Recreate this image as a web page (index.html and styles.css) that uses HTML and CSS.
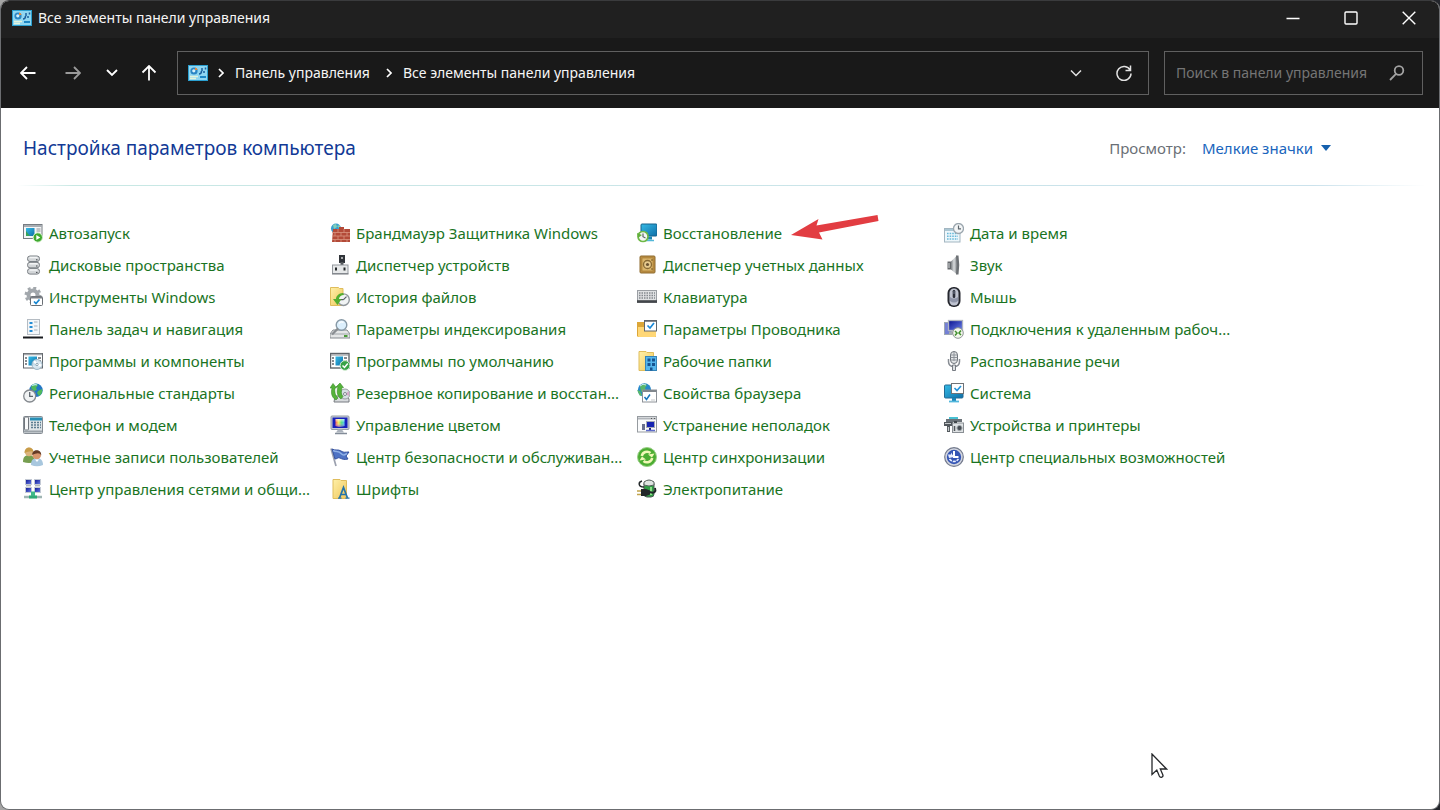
FILE: index.html
```html
<!DOCTYPE html>
<html lang="ru">
<head>
<meta charset="utf-8">
<title>Все элементы панели управления</title>
<link rel="stylesheet" href="styles.css">
</head>
<body>
<svg class="defs" aria-hidden="true">
  <defs>
    <linearGradient id="blue" x1="0" y1="0" x2="1" y2="1"><stop offset="0" stop-color="#35bbe6"/><stop offset="1" stop-color="#0f6fa8"/></linearGradient>
    <linearGradient id="navy" x1="0" y1="0" x2="1" y2="1"><stop offset="0" stop-color="#0a1290"/><stop offset="1" stop-color="#6d83e8"/></linearGradient>
    <linearGradient id="grey" x1="0" y1="0" x2="1" y2="0"><stop offset="0" stop-color="#7c8084"/><stop offset=".5" stop-color="#d9dcde"/><stop offset="1" stop-color="#85898d"/></linearGradient>
    <linearGradient id="folder" x1="0" y1="0" x2="1" y2="1"><stop offset="0" stop-color="#fff0a8"/><stop offset="1" stop-color="#efc75c"/></linearGradient>
    <linearGradient id="hue" x1="0" y1="0" x2="1" y2="0"><stop offset="0" stop-color="#f04a4a"/><stop offset=".35" stop-color="#f5ec4a"/><stop offset=".65" stop-color="#44dd72"/><stop offset="1" stop-color="#35bdf2"/></linearGradient>
    <linearGradient id="shade" x1="0" y1="0" x2="0" y2="1"><stop offset="0" stop-color="#fff" stop-opacity=".7"/><stop offset=".45" stop-color="#fff" stop-opacity=".1"/><stop offset="1" stop-color="#7a1fe0" stop-opacity=".7"/></linearGradient>
    <symbol id="cpl" viewBox="0 0 20 16">
      <rect width="20" height="16" fill="#2a9fd0"/><rect x="1" y="1" width="18" height="14" fill="#8fd6f1"/>
      <circle cx="6" cy="6" r="3.600" fill="#2c86c4"/><path d="M7 5V2.400A3 3 0 0 1 9.600 5z" fill="#e58a3f"/><circle cx="5.800" cy="5.800" r="1.600" fill="#d6f1fb"/>
      <path d="M11 9q2.500 0 2.500-3M14 3v3M16 8V6M17.500 2.500v2" stroke="#1b5f9c" stroke-width="1.500" fill="none"/><path d="M2 11.500h8M2 13.500h6" stroke="#e3f3dc" stroke-width="1.300"/><path d="M12 11h6v2h-6z" fill="#1c86c4"/>
    </symbol>
  </defs>
</svg>
<div class="window">
  <header class="titlebar">
    <svg class="app-icon"><use href="#cpl"/></svg>
    <h1 class="window-title">Все элементы панели управления</h1>
    <div class="window-buttons">
      <button class="window-button" aria-label="Свернуть"><svg viewBox="0 0 14 14"><path d="M.5 7.500h13"/></svg></button>
      <button class="window-button" aria-label="Развернуть"><svg viewBox="0 0 14 14"><rect x="1" y="1" width="12" height="12" rx="1"/></svg></button>
      <button class="window-button" aria-label="Закрыть"><svg viewBox="0 0 14 14"><path d="M.7.7l12.600 12.600M13.300.7.7 13.300"/></svg></button>
    </div>
  </header>

  <nav class="toolbar">
    <div class="nav-buttons">
      <button class="nav-button" aria-label="Назад"><svg viewBox="0 0 16 16"><path d="M15.500 8H1.500M7 2 1 8l6 6"/></svg></button>
      <button class="nav-button dim" aria-label="Вперед"><svg viewBox="0 0 16 16"><path d="M.5 8h14M9 2l6 6-6 6"/></svg></button>
      <button class="nav-button slim" aria-label="Последние расположения"><svg viewBox="0 0 16 16"><path d="M3 5l5 5 5-5"/></svg></button>
      <button class="nav-button" aria-label="Вверх"><svg viewBox="0 0 16 16"><path d="M8 15.500V1M1.500 7.500 8 1l6.500 6.500"/></svg></button>
    </div>
    <div class="address">
      <svg class="app-icon"><use href="#cpl"/></svg>
      <svg class="crumb-arrow" viewBox="0 0 6 10"><path d="M1 1l4 4-4 4"/></svg>
      <a class="crumb" href="#">Панель управления</a>
      <svg class="crumb-arrow" viewBox="0 0 6 10"><path d="M1 1l4 4-4 4"/></svg>
      <a class="crumb" href="#">Все элементы панели управления</a>
      <div class="address-actions">
        <button class="address-button" aria-label="Предыдущие расположения"><svg viewBox="0 0 16 16"><path d="M3 5.500l5 5 5-5"/></svg></button>
        <button class="address-button" aria-label="Обновить"><svg viewBox="0 0 16 16"><path d="M14.200 5.200A7 7 0 1 0 15 8.500M14.500.5v5h-5"/></svg></button>
      </div>
    </div>
    <label class="search">
      <input class="search-input" type="text" placeholder="Поиск в панели управления" aria-label="Поиск в панели управления">
      <svg class="search-icon" viewBox="0 0 16 16"><circle cx="10" cy="5.500" r="4.300"/><path d="M7 8.800 1 15"/></svg>
    </label>
  </nav>

  <main class="content">
    <div class="heading">
      <h2 class="heading-title">Настройка параметров компьютера</h2>
      <div class="view">
        <label class="view-label" for="view">Просмотр:</label>
        <div class="view-box">
          <select class="view-select" id="view"><option>Мелкие значки</option></select>
          <svg class="view-arrow" viewBox="0 0 10 6"><path d="M0 0h10L5 6z"/></svg>
        </div>
      </div>
    </div>

    <ul class="items">
      <li><a class="item" href="#"><svg class="icon" viewBox="0 0 20 20"><rect x=".5" y="1.500" width="18.500" height="14" fill="#f4f5f6" stroke="#777c82"/><path d="M1 3h18" stroke="#a8adb2" stroke-width="2"/><rect x="3" y="5" width="8.500" height="8" fill="url(#blue)"/><path d="M3 13V8l4 5z" fill="#37a35a"/><path d="M13.500 6h4M13.500 8h4" stroke="#8c9299"/><circle cx="14.800" cy="14.500" r="4.700" fill="#3fa92f" stroke="#ddf3d6"/><path d="M13.300 12l4 2.500-4 2.500z" fill="#fff"/></svg>Автозапуск</a></li>
      <li><a class="item" href="#"><svg class="icon" viewBox="0 0 20 20"><g fill="#d3d6d8" stroke="#7b8085"><rect x="4.500" y="1" width="12" height="5.500" rx="2.500"/><rect x="4.500" y="7.300" width="12" height="5.500" rx="2.500"/><rect x="4.500" y="13.600" width="12" height="5.500" rx="2.500"/></g><path d="M6.500 2.500h8M6.500 8.800h8M6.500 15.100h8" stroke="#f4f5f6" stroke-width="1.500"/><path d="M13 4.800h1.500M13 11h1.500M13 17.400h1.500" stroke="#41464a"/></svg>Дисковые пространства</a></li>
      <li><a class="item" href="#"><svg class="icon" viewBox="0 0 20 20"><circle cx="10" cy="8" r="4.500" fill="none" stroke="#a2a7ac" stroke-width="4"/><circle cx="10" cy="8" r="7.200" fill="none" stroke="#a2a7ac" stroke-width="2.500" stroke-dasharray="3 2.655"/><rect x="7.500" y="9.500" width="12" height="9" rx="1" fill="#fff" stroke="#6a6f75"/><path d="M8 10.500h11" stroke="#7a7f85" stroke-width="2"/><path d="M11 14.500l2 2 3.500-4" fill="none" stroke="#1686d1" stroke-width="1.700"/></svg>Инструменты Windows</a></li>
      <li><a class="item" href="#"><svg class="icon" viewBox="0 0 20 20"><rect x="4.500" y=".5" width="12" height="15" fill="#f3f6f9" stroke="#b5bcc3"/><path d="M6.500 4h3M6.500 8h3M6.500 12h3" stroke="#258dd6" stroke-width="2"/><path d="M11 3h3.500M11 7h3.500M11 11h3.500" stroke="#a6b1bc"/><path d="M0 18.500h20" stroke="#191b1f" stroke-width="2"/></svg>Панель задач и навигация</a></li>
      <li><a class="item" href="#"><svg class="icon" viewBox="0 0 20 20"><rect x=".5" y="2.500" width="19" height="14.500" fill="#fff" stroke="#64696e"/><path d="M1 3.500h18" stroke="#a4a9ae" stroke-width="1.500"/><path d="M2 7h2M2 10h2M2 13h2M15 7h3M15 10h3" stroke="#60656b" stroke-width="1.500"/><rect x="5.500" y="5.500" width="8.500" height="9" fill="url(#blue)"/><circle cx="14" cy="13.500" r="5" fill="#d7e7f1" fill-opacity=".9" stroke="#9eb8c8"/><path d="M14 13.500l-3-3.500M14 13.500l4.500 1" stroke="#fff" stroke-width="2"/><circle cx="14" cy="13.500" r="1.200" fill="#fff" stroke="#8ca5b3"/></svg>Программы и компоненты</a></li>
      <li><a class="item" href="#"><svg class="icon" viewBox="0 0 20 20"><circle cx="13" cy="7.300" r="6.700" fill="#2377c6"/><path d="M9 2c3-2 5-1 6 0l-2 3 1 2-3 1-3-3zM15 8l4-2c1 3-1 6-3 7l-2-3z" fill="#50b95b"/><path d="M9 2.500Q12 1 14 2" stroke="#bde8f9" stroke-width="1.200" fill="none"/><circle cx="6.700" cy="13" r="6" fill="#f0f2f3" stroke="#84898e" stroke-width="1.300"/><path d="M6.700 9v4.300H10" fill="none" stroke="#5d666d" stroke-width="1.300"/></svg>Региональные стандарты</a></li>
      <li><a class="item" href="#"><svg class="icon" viewBox="0 0 20 20"><rect x=".5" y="1.500" width="19" height="17" rx="1" fill="#dfe4e7" stroke="#868d94"/><rect x="1.500" y="2" width="4" height="13" rx="1" fill="#f9fafb" stroke="#70767c"/><path d="M7 2.500h12v3H7z" fill="#268eb5"/><path d="M8 7.500h10M8 10h10M8 12.500h10" stroke="#5c7c90" stroke-width="1.500" stroke-dasharray="2 1"/><path d="M1 16.500h18" stroke="#9ba3a9" stroke-width="2"/></svg>Телефон и модем</a></li>
      <li><a class="item" href="#"><svg class="icon" viewBox="0 0 20 20"><path d="M0 15c0-5 2-7 6-7s6 3 6 7q-6 2-12 0z" fill="#769e50"/><circle cx="6" cy="5" r="4.200" fill="#dcb47c"/><path d="M1.500 6c0-7.500 9-7 9-1C8 3.500 5 5 1.500 6z" fill="#c89c49"/><path d="M8 18c0-5 2-7 6-7s6 3 6 7q-6 2.500-12 0z" fill="#a8c7de"/><circle cx="13.700" cy="8" r="4.300" fill="#d7956c"/><path d="M9.300 8C8.500 1.500 19 1.500 18.200 8.500 17 5 13 6 9.300 8z" fill="#633a25"/><path d="M12 12.500l2 2.500 2-2.500" fill="#fff"/></svg>Учетные записи пользователей</a></li>
      <li><a class="item" href="#"><svg class="icon" viewBox="0 0 20 20"><g stroke="#c3c9d4"><rect x="2.500" y=".5" width="6" height="5" fill="url(#navy)"/><rect x="11.500" y=".5" width="6" height="5" fill="url(#navy)"/><rect x="2.500" y="8.500" width="6" height="5" fill="url(#navy)"/><rect x="11.500" y="8.500" width="6" height="5" fill="url(#navy)"/></g><path d="M3 6.800h5M12 6.800h5" stroke="#92989f"/><path d="M10 12.500v5" stroke="#3fb98b" stroke-width="4"/><path d="M1 18h18" stroke="#9fb5b3" stroke-width="2.500"/><path d="M6 18h8" stroke="#2faa78" stroke-width="3"/></svg>Центр управления сетями и общи...</a></li>

      <li><a class="item" href="#"><svg class="icon" viewBox="0 0 20 20"><circle cx="6" cy="5.500" r="5" fill="#3b9fcf"/><path d="M3 2l3-1 1 3-3 2zM7 3l3-1v4z" fill="#82d1b9"/><path d="M3 6h6V4h5v2h6v13H2z" fill="#b34a38"/><path d="M2 9.500h18M2 13h18M2 16.500h18M8 6v3.500M14 6v3.500M5 9.500V13M11 9.500V13M17 9.500V13M8 13v3.500M14 13v3.500M5 16.500V19M11 16.500V19M17 16.500V19" stroke="#d99480" stroke-width=".8"/></svg>Брандмауэр Защитника Windows</a></li>
      <li><a class="item" href="#"><svg class="icon" viewBox="0 0 20 20"><path d="M9 0h6v8H9z" fill="#303439"/><path d="M11 2h2v2h-2z" fill="#a7a9ab"/><path d="M12 7v4" stroke="#55595d" stroke-width="3"/><rect x="2.500" y="10" width="15.500" height="8.500" fill="#e6e8e9" stroke="#93989d"/><path d="M6 12.500v3M14.500 12.500v3" stroke="#25282b" stroke-width="2"/><path d="M2 19h16.500" stroke="#74797e"/></svg>Диспетчер устройств</a></li>
      <li><a class="item" href="#"><svg class="icon" viewBox="0 0 20 20"><path d="M.5.5h8l1 1H13v17H.5z" fill="url(#folder)" stroke="#dfbd5c"/><circle cx="13.500" cy="12.700" r="5.800" fill="#f1f4f5" stroke="#90979c" stroke-width="1.400"/><path d="M13.500 12.700l3-3M13.500 12.700H10" stroke="#575e64" stroke-width="1.200"/><path d="M13 6c-4 0-7 3-7 6H3l4.500 6 4-6H9c0-2 2-4 5-4z" fill="#54ae2f"/></svg>История файлов</a></li>
      <li><a class="item" href="#"><svg class="icon" viewBox="0 0 20 20"><path d="M3 11h14l3 4v4H0v-4z" fill="#e4e6e7" stroke="#858a8e"/><path d="M.5 15h19" stroke="#a3a8ac"/><path d="M14 17h3.500" stroke="#4b9b3a" stroke-width="2"/><circle cx="11.500" cy="6" r="5.300" fill="#dceffc" stroke="#8799a6" stroke-width="1.400"/><path d="M8 9.500l-6 6" stroke="#8a8e92" stroke-width="2.300"/><path d="M9 4.500q2-2.500 4.500-1" fill="none" stroke="#fff" stroke-width="1.300"/></svg>Параметры индексирования</a></li>
      <li><a class="item" href="#"><svg class="icon" viewBox="0 0 20 20"><rect x=".5" y="2.500" width="18.500" height="14.500" fill="#fff" stroke="#5f6469" stroke-width="1.400"/><path d="M1 4h18" stroke="#84898e"/><path d="M2 7h2M2 10h2M2 13h2M14 7h3M14 10h3" stroke="#60656b" stroke-width="1.400"/><rect x="5.500" y="5.500" width="7.500" height="9" fill="url(#blue)"/><circle cx="15" cy="14.500" r="4.900" fill="#39a246" stroke="#d9efd9"/><path d="M12.500 14.500l2 2 3.300-4" fill="none" stroke="#fff" stroke-width="1.500"/></svg>Программы по умолчанию</a></li>
      <li><a class="item" href="#"><svg class="icon" viewBox="0 0 20 20"><path d="M5 13h12l2 3v3H4z" fill="#d7dadd" stroke="#777b80"/><circle cx="15" cy="11" r="5" fill="#d7e0e4" stroke="#9b9fa4"/><path d="M15 11l4-3v5z" fill="#d7a8c9"/><circle cx="15" cy="11" r="1.500" fill="#fff" stroke="#7f878d"/><path d="M6 17C1 14 1 9 2 5L0 5 3 .5 6.500 5H5c-.5 4 0 7 3 10zM11 16C6 12 7 7 8 4L6 4l4-4 3.500 4.500H12c-1 4-1 7 1 9z" fill="#55b33a" stroke="#3b8a2b" stroke-width=".6"/></svg>Резервное копирование и восстан...</a></li>
      <li><a class="item" href="#"><svg class="icon" viewBox="0 0 20 20"><rect x="1" y="1" width="18" height="13.500" rx="1" fill="#c7ccd4" stroke="#949ca7"/><rect x="2.500" y="2.500" width="15" height="10.500" fill="#1620bb"/><path d="M5.500 4l9 0v7l-4.500 1-4.500-1z" fill="url(#hue)"/><path d="M5.500 4l9 0v7l-4.500 1-4.500-1z" fill="url(#shade)"/><path d="M8 14.500h4l2 3H6z" fill="#acb3bd"/><path d="M5 18.500h12" stroke="#838c98" stroke-width="1.500"/></svg>Управление цветом</a></li>
      <li><a class="item" href="#"><svg class="icon" viewBox="0 0 20 20"><path d="M1 1.500l5 17.500" stroke="#9ba0ae" stroke-width="1.700"/><path d="M2 2c4 2 6 0 9 2s4 1 8 1l-3 4 2 3c-4 1-6 0-8-1s-3 1-5 1z" fill="#4f73c4" stroke="#3350a0"/><path d="M3 3.500c4 2 5 0 8 3s4 1 6 0" stroke="#8fb0e6" fill="none" stroke-width="1.500"/></svg>Центр безопасности и обслуживан...</a></li>
      <li><a class="item" href="#"><svg class="icon" viewBox="0 0 20 20"><path d="M3 .5h7l1 1h5.500v18H3z" fill="url(#folder)" stroke="#dfbd5c"/><path d="M9.500 19l4-10.500L17.500 19M10.500 15.500h6" stroke="#2474aa" stroke-width="1.700" fill="none"/><path d="M8 19.200h3.500M15.500 19.200h4" stroke="#2474aa" stroke-width="1.300"/></svg>Шрифты</a></li>

      <li class="marked"><a class="item" href="#"><svg class="icon" viewBox="0 0 20 20"><rect x="4" y="1" width="16" height="12" rx="1" fill="url(#blue)" stroke="#17628b"/><path d="M11 13.500h4v3h-4z" fill="#1a86b5"/><path d="M9 17.500h8" stroke="#52b7d8" stroke-width="1.500"/><circle cx="6" cy="13.500" r="5" fill="#f3f6f4" stroke="#6fb947" stroke-width="1.700"/><path d="M0 10l1 5 4-3z" fill="#62af3c"/><path d="M6 10.500v3.200l2.500 1.300" fill="none" stroke="#5b6764" stroke-width="1.200"/></svg>Восстановление</a><svg class="pointer" viewBox="0 0 88 26" aria-hidden="true"><path d="M0 20 27.500 4l-2 6.500L86.500 0l1 6-59.500 11.500 3.500 7z"/></svg></li>
      <li><a class="item" href="#"><svg class="icon" viewBox="0 0 20 20"><rect x="3" y="1" width="15" height="17" rx="1" fill="#bd9044" stroke="#8e6b2f"/><rect x="5" y="3" width="11" height="13" fill="#dbb56a" stroke="#a57b34" stroke-width=".7"/><circle cx="10.500" cy="9.500" r="4" fill="#e7cb8f" stroke="#896a34" stroke-width="1.300"/><circle cx="10.500" cy="9.500" r="1.600" fill="#6d5532"/><path d="M15 4v2M15 13v2" stroke="#715522"/></svg>Диспетчер учетных данных</a></li>
      <li><a class="item" href="#"><svg class="icon" viewBox="0 0 20 20"><rect x=".5" y="3.500" width="19" height="12" fill="#dfe1e3" stroke="#9b9fa4"/><path d="M2 6h16M2 8.500h16M2 11h16" stroke="#84898e" stroke-width="1.300" stroke-dasharray="1.500 1"/><path d="M0 14.500h20" stroke="#43474b" stroke-width="2.600"/></svg>Клавиатура</a></li>
      <li><a class="item" href="#"><svg class="icon" viewBox="0 0 20 20"><path d="M0 3h7l2 2h10v13H1l-1-1z" fill="#dca637"/><path d="M1 8h18v9q0 1-1 1H2q-1 0-1-1z" fill="#ffd776"/><rect x="7.500" y="1.500" width="12" height="10.500" fill="#fff" stroke="#60666c"/><path d="M8 2h11" stroke="#60666c" stroke-width="1.500"/><path d="M10.500 6.500l2.500 2.500 4-5" fill="none" stroke="#1989d7" stroke-width="1.700"/></svg>Параметры Проводника</a></li>
      <li><a class="item" href="#"><svg class="icon" viewBox="0 0 20 20"><path d="M2 .5h7l1 1h6.500v18H2z" fill="url(#folder)" stroke="#dfbd5c"/><rect x="8.500" y="5.500" width="11" height="14" fill="#54b6ed" stroke="#3584b8"/><path d="M10.500 7.500h3v3h-3zM15 7.500h3v3h-3zM10.500 12h3v3h-3zM15 12h3v3h-3zM13 16.500h2.500v3H13z" fill="#155390"/></svg>Рабочие папки</a></li>
      <li><a class="item" href="#"><svg class="icon" viewBox="0 0 20 20"><circle cx="7.500" cy="7" r="6.700" fill="#2789cb"/><path d="M3 3q4-4 7-1L8 5 9 7 4 9zM0 7l3 1 2 4-2 1z" fill="#59b76a"/><path d="M3 3q3-3 6-1" fill="none" stroke="#c5eaf7"/><rect x="5.500" y="7" width="14" height="12" fill="#fff" stroke="#8d9298"/><path d="M6 8h13.500" stroke="#81878d" stroke-width="2"/><path d="M7.500 14l2 2.500 3.500-5" fill="none" stroke="#1774bd" stroke-width="1.500"/><path d="M14.500 17h3" stroke="#898f95" stroke-dasharray="1 1"/></svg>Свойства браузера</a></li>
      <li><a class="item" href="#"><svg class="icon" viewBox="0 0 20 20"><rect x=".5" y="1.500" width="19" height="15.500" fill="#fafbfc" stroke="#969ba0"/><path d="M1 3.500h18.500" stroke="#b1b5ba" stroke-width="2"/><path d="M14 3.500h1M17 3.500h1" stroke="#555"/><rect x="9.500" y="6.500" width="8" height="6" fill="#1624b1" stroke="#a6abb5"/><path d="M13 13v2" stroke="#1b247e" stroke-width="2"/><path d="M9 15.500h9" stroke="#5d6bc9" stroke-width="1.500"/><path d="M5 9h3v6H5z" fill="#68708e"/></svg>Устранение неполадок</a></li>
      <li><a class="item" href="#"><svg class="icon" viewBox="0 0 20 20"><circle cx="10" cy="10" r="9.500" fill="#4cad32" stroke="#9bcf88"/><path d="M4.800 9a5.300 5.300 0 0 1 8.700-3M15.200 11a5.300 5.300 0 0 1-8.700 3" fill="none" stroke="#f1f7b6" stroke-width="2.500"/><path d="M17.500 6.500l-2.500 4-4-3zM2.500 13.500l2.500-4 4 3z" fill="#f1f7b6"/></svg>Центр синхронизации</a></li>
      <li><a class="item" href="#"><svg class="icon" viewBox="0 0 20 20"><rect x="7" y="2" width="10" height="16" rx="3" fill="#2f9d45" stroke="#4c5752"/><path d="M7 3q5-4 10 0v3q-5 2-10 0z" fill="#dfe4e1" stroke="#596360"/><path d="M14 8v8" stroke="#8ade85" stroke-width="2"/><path d="M7 8C1 8 1 3 5 2" stroke="#252a2b" fill="none" stroke-width="1.500"/><path d="M4 10h5l4 1.500v4L9 17H4z" fill="#232729"/><path d="M0 12h4M0 15.500h4" stroke="#c1a44b" stroke-width="1.500"/><path d="M13 13c5 2 6-1 5-4" fill="none" stroke="#202526" stroke-width="2"/></svg>Электропитание</a></li>

      <li><a class="item" href="#"><svg class="icon" viewBox="0 0 20 20"><rect x=".5" y="5.500" width="15.500" height="13.500" fill="#eef7fb" stroke="#a3b6c1"/><path d="M1 7h15" stroke="#abc7d4" stroke-width="2"/><path d="M3 10.500h11M3 13.200h11M3 16h11" stroke="#68b9d9" stroke-width="1.600" stroke-dasharray="1.600 1"/><circle cx="14.500" cy="5.500" r="5" fill="#f3f5f6" stroke="#9ba6ae" stroke-width="1.300"/><path d="M14.500 2.500v3.300H17" fill="none" stroke="#5c666d" stroke-width="1.200"/></svg>Дата и время</a></li>
      <li><a class="item" href="#"><svg class="icon" viewBox="0 0 20 20"><path d="M3.500 6.500H8v8H3.500z" fill="#66696d"/><path d="M7 6.500L13 .5v19l-6-5z" fill="url(#grey)"/><path d="M12 .5h2.500q1.500 9.500 0 19H12q1.500-9.500 0-19z" fill="#6c7074"/><path d="M5 8v5" stroke="#aeb2b5" stroke-width="1.500"/></svg>Звук</a></li>
      <li><a class="item" href="#"><svg class="icon" viewBox="0 0 20 20"><rect x="3.500" y="0" width="13" height="20" rx="6" fill="#25272e"/><rect x="5.500" y="1.500" width="9" height="17" rx="4.300" fill="#bfc3d0"/><path d="M6 10q4 3 8 0v4q-4 3-8 0z" fill="#8f95a9"/><rect x="8.700" y="3" width="2.600" height="8" rx="1.300" fill="#292c37"/><path d="M10 4v3" stroke="#777e93"/></svg>Мышь</a></li>
      <li><a class="item" href="#"><svg class="icon" viewBox="0 0 20 20"><rect x=".5" y="3.500" width="7" height="12" fill="#7480d5" stroke="#9da6b2"/><rect x="4.500" y="1.500" width="14" height="10" fill="url(#navy)" stroke="#b0b5c0" stroke-width="1.300"/><path d="M5 14h6" stroke="#a3a9b1" stroke-width="3"/><circle cx="14" cy="14" r="5.300" fill="#f4f6ed" stroke="#8d9494"/><path d="M11 12l2 2-2 2.500M17 11.500L15 14l2 2" stroke="#41902e" stroke-width="1.500" fill="none"/></svg>Подключения к удаленным рабоч...</a></li>
      <li><a class="item" href="#"><svg class="icon" viewBox="0 0 20 20"><rect x="6.500" y=".5" width="7" height="12" rx="3.500" fill="#e4e6e8" stroke="#6e737a"/><path d="M6.500 4h7M6.500 6.500h7M6.500 9h7M10 1v9" stroke="#8e939a"/><path d="M4.500 8v2.500q0 5 5.500 5t5.500-5V8" fill="none" stroke="#888d94" stroke-width="1.500"/><path d="M8.500 14h3v5.500h-3z" fill="#dde0e3" stroke="#767b82"/></svg>Распознавание речи</a></li>
      <li><a class="item" href="#"><svg class="icon" viewBox="0 0 20 20"><rect x=".5" y="2" width="18.500" height="13" rx="1" fill="url(#blue)" stroke="#246b93"/><path d="M8 15h4v3H8z" fill="#1782b6"/><path d="M5 18.500h10" stroke="#51b7dc" stroke-width="1.800"/><rect x="7.500" y=".5" width="12" height="10" fill="#fff" stroke="#6e7378"/><path d="M10.500 5l2.500 2.500 4-4.500" fill="none" stroke="#2293da" stroke-width="1.600"/></svg>Система</a></li>
      <li><a class="item" href="#"><svg class="icon" viewBox="0 0 20 20"><path d="M5 2h9v5H5z" fill="#48c1d3"/><path d="M2 4h16v3H2z" fill="#6b7278"/><path d="M0 7h9v4H6v6H3v-6H0z" fill="#52585d"/><path d="M1 8.500h6M4.500 12v4" stroke="#c4c8cb" stroke-width="1.200"/><rect x="8.500" y="8" width="11" height="9.500" fill="#dfe2e4" stroke="#8a8f94"/><path d="M10 7h3" stroke="#41474b" stroke-width="2"/><circle cx="15.500" cy="13" r="2.600" fill="#474d53" stroke="#a7aeb2"/><path d="M10.500 11v5" stroke="#51575b" stroke-width="1.500"/></svg>Устройства и принтеры</a></li>
      <li><a class="item" href="#"><svg class="icon" viewBox="0 0 20 20"><circle cx="10" cy="10" r="9.300" fill="#d4d7e0" stroke="#737a8d" stroke-width="1.200"/><circle cx="10" cy="10" r="7.200" fill="#3455b4"/><path d="M10 4v6h4.500" fill="none" stroke="#fff" stroke-width="2"/><path d="M4 7.500h3V5.500l3 4.500-5 1z" fill="#e9efff"/><path d="M5.500 12q4.500 5 9 0" fill="none" stroke="#e9efff" stroke-width="1.700" stroke-dasharray="3 1"/></svg>Центр специальных возможностей</a></li>
    </ul>
  </main>
</div>
<svg class="cursor" viewBox="0 0 17 26" aria-hidden="true"><path d="M1 1v20.500l4.800-4.500 2.500 6q.8 1.800 2.500 1.200 1.700-.8 1-2.500l-2.500-5.700H15.500z"/></svg>
</body>
</html>
```
FILE: styles.css
```css
* { box-sizing: border-box; }

body {
  margin: 0;
  background: linear-gradient(to right, #a5a5a5 48%, #24262c 48%);
  font-family: "Noto Sans", "Open Sans", sans-serif;
  font-size: 15px;
  line-height: 20px;
}

button, input, select { font: inherit; }
button { padding: 0; border: 0; background: none; color: inherit; }
a { color: inherit; text-decoration: none; }
svg { flex: none; }
.defs { position: absolute; width: 0; height: 0; }

.window {
  display: flex;
  flex-direction: column;
  min-height: 100vh;
  border: 1px solid #6b6d70;
  border-top-color: #3a3b3d;
  border-radius: 9px;
  background: #fff;
  overflow: hidden;
}

.titlebar {
  display: flex;
  align-items: center;
  height: 37px;
  padding: 0 1px 4px 11px;
  background: #202020;
  color: #f5f5f5;
  font-size: 14px;
}

.app-icon { width: 20px; height: 16px; }
.window-title { margin: 0 0 0 6px; font-size: 14px; font-weight: 400; }
.window-buttons { display: flex; margin-left: auto; }

.window-button {
  display: flex;
  align-items: center;
  justify-content: center;
  width: 58px;
  height: 34px;
}

.window-button svg { width: 14px; height: 14px; fill: none; stroke: #fff; stroke-width: 1.4; }

.toolbar {
  display: flex;
  align-items: center;
  height: 70px;
  padding: 0 16px 0 12px;
  background: #191919;
  color: #f5f5f5;
  font-size: 14px;
}

.nav-buttons { display: flex; gap: 15px; width: 164px; }

.nav-button {
  display: flex;
  align-items: center;
  justify-content: center;
  width: 30px;
  height: 32px;
}

.nav-button.slim { width: 18px; }
.nav-button svg { width: 16px; height: 16px; fill: none; stroke: #fff; stroke-width: 1.8; }
.nav-button.dim svg { stroke: #9a9a9a; }
.nav-button.slim + .nav-button { margin-left: -2px; }

.address {
  display: flex;
  flex: 1;
  align-items: center;
  height: 44px;
  padding-left: 10px;
  border: 1px solid #606060;
}

.crumb { padding-right: 6px; }

.crumb-arrow {
  width: 6px;
  height: 10px;
  margin: 0 11px 0 10px;
  fill: none;
  stroke: #fff;
  stroke-width: 1.7;
}

.address-actions { display: flex; gap: 16px; margin-left: auto; padding-right: 8px; }

.address-button {
  display: flex;
  align-items: center;
  justify-content: center;
  width: 32px;
  height: 32px;
}

.address-button svg { width: 16px; height: 16px; fill: none; stroke: #e2e2e2; stroke-width: 1.5; }

.search {
  display: flex;
  align-items: center;
  width: 259px;
  height: 44px;
  margin-left: 15px;
  padding: 0 17px 0 11px;
  border: 1px solid #606060;
}

.search-input {
  flex: 1;
  min-width: 0;
  padding: 0;
  border: 0;
  outline: 0;
  background: none;
  color: #fff;
}

.search-input::placeholder { color: #757575; opacity: 1; }
.search-icon { width: 16px; height: 16px; fill: none; stroke: #a2a2a2; stroke-width: 1.8; }

.content { padding: 0 14px 0 17px; }

.heading {
  display: flex;
  align-items: center;
  justify-content: space-between;
  height: 78px;
  padding: 3px 94px 0 5px;
  border-bottom: 1px solid;
  border-image: linear-gradient(to right, #fff, #c8e8e4 4%, #cbe2ec 92%, #fff) 1;
}

.heading-title {
  margin: 0;
  color: #123a96;
  font-size: 19px;
  font-weight: 400;
  line-height: 24px;
}

.view { display: flex; gap: 16px; }
.view-label { color: #6a6f76; }
.view-box { display: flex; align-items: center; gap: 7px; }
.view-select { appearance: none; padding: 0; border: 0; background: none; color: #1a65bd; }
.view-arrow { width: 10px; height: 6px; fill: #1560ad; }

.items {
  display: grid;
  grid-template-rows: repeat(9, 32px);
  grid-template-columns: repeat(4, minmax(0, 1fr));
  grid-auto-flow: column;
  max-width: 1233px;
  margin: 31px 0 0;
  padding: 0 0 0 5px;
  list-style: none;
}

.item {
  display: inline-flex;
  align-items: center;
  gap: 6px;
  height: 32px;
  color: #1a741f;
  white-space: nowrap;
}

.icon { width: 20px; height: 20px; }

.marked { position: relative; }

.pointer {
  position: absolute;
  top: -2px;
  left: 154px;
  width: 88px;
  height: 26px;
  fill: #e23d42;
}

.cursor {
  position: absolute;
  top: 753px;
  left: 1151px;
  width: 17px;
  height: 26px;
  fill: #fff;
  stroke: #26282b;
  stroke-width: 1.3;
}
```
